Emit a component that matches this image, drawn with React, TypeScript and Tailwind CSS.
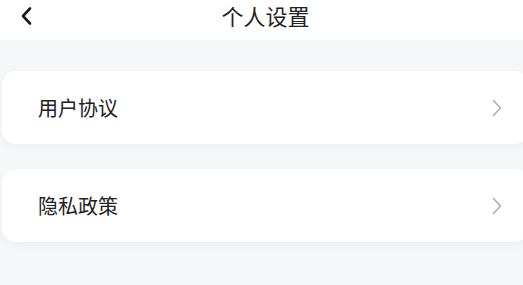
const items = ['用户协议', '隐私政策'];

function ChevronRight() {
  return (
    <svg width="12" height="18" viewBox="0 0 12 18" fill="none">
      <path d="M2.5 1.5 L9.5 9 L2.5 16.5" stroke="#ababab" strokeWidth="1.5" strokeLinecap="round" strokeLinejoin="round" />
    </svg>
  );
}

export default function App() {
  return (
    <div className="w-[523px] h-[285px] overflow-hidden bg-[#f6f7f8] font-['Noto_Sans_CJK_SC','Noto_Sans',sans-serif] text-[#222]">
      {/* Header */}
      <div className="h-10 bg-white flex items-center relative">
        <svg className="absolute left-[19px] top-[6px]" width="16" height="20" viewBox="0 0 16 20" fill="none">
          <path d="M11 2.5 L4 10 L11 17.5" stroke="#1a1a1a" strokeWidth="2.6" strokeLinecap="round" strokeLinejoin="round" />
        </svg>
        <h1 className="w-full text-center text-[22px] leading-none -mt-[10px] pl-[8px]">个人设置</h1>
      </div>

      {/* List */}
      <div className="pt-[31px] flex flex-col gap-[25px] ml-[2px] mr-[-6px]">
        {items.map(item => (
          <div
            key={item}
            className="h-[73px] bg-white rounded-[14px] shadow-[0_3px_10px_rgba(0,0,0,0.04)] flex items-center justify-between pl-[36px] pr-[26px]"
          >
            <span className="text-[20px] leading-none">{item}</span>
            <ChevronRight />
          </div>
        ))}
      </div>
    </div>
  );
}
